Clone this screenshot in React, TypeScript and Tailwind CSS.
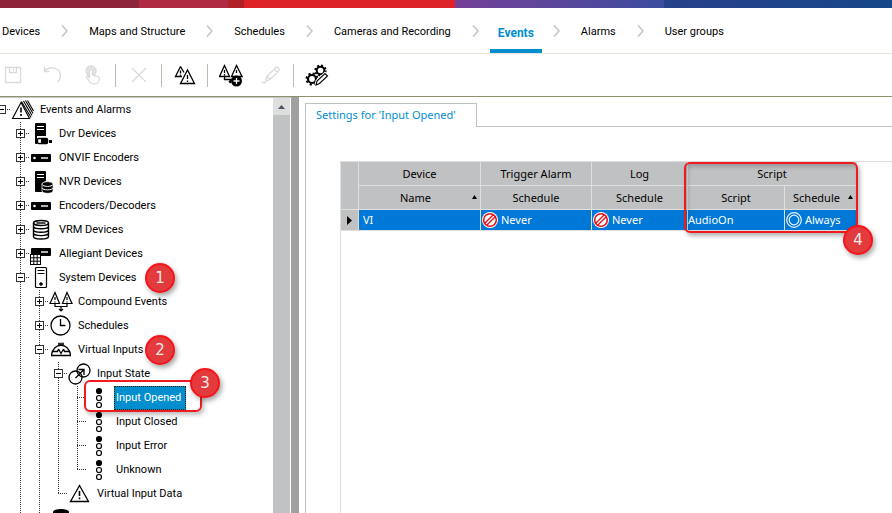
import { ReactNode } from 'react';
import clsx from 'clsx';

type IconName =
    | 'alarms'
    | 'dvr'
    | 'encoder'
    | 'nvr'
    | 'vrm'
    | 'allegiant'
    | 'system'
    | 'compound'
    | 'clock'
    | 'virtual'
    | 'state'
    | 'dots'
    | 'warning'
    | 'database';

type TreeNode = {
    id: string;
    label?: string;
    icon: IconName;
    state?: 'open' | 'closed';
    selected?: boolean;
    children?: TreeNode[];
};

const tree: TreeNode = {
    id: 'root',
    label: 'Events and Alarms',
    icon: 'alarms',
    state: 'open',
    children: [
        { id: 'dvr', label: 'Dvr Devices', icon: 'dvr', state: 'closed' },
        { id: 'onvif', label: 'ONVIF Encoders', icon: 'encoder', state: 'closed' },
        { id: 'nvr', label: 'NVR Devices', icon: 'nvr', state: 'closed' },
        { id: 'encoders', label: 'Encoders/Decoders', icon: 'encoder', state: 'closed' },
        { id: 'vrm', label: 'VRM Devices', icon: 'vrm', state: 'closed' },
        { id: 'allegiant', label: 'Allegiant Devices', icon: 'allegiant', state: 'closed' },
        {
            id: 'system',
            label: 'System Devices',
            icon: 'system',
            state: 'open',
            children: [
                { id: 'compound', label: 'Compound Events', icon: 'compound', state: 'closed' },
                { id: 'schedules', label: 'Schedules', icon: 'clock', state: 'closed' },
                {
                    id: 'virtual',
                    label: 'Virtual Inputs',
                    icon: 'virtual',
                    state: 'open',
                    children: [
                        {
                            id: 'state',
                            label: 'Input State',
                            icon: 'state',
                            state: 'open',
                            children: [
                                { id: 'opened', label: 'Input Opened', icon: 'dots', selected: true },
                                { id: 'closed', label: 'Input Closed', icon: 'dots' },
                                { id: 'error', label: 'Input Error', icon: 'dots' },
                                { id: 'unknown', label: 'Unknown', icon: 'dots' },
                            ],
                        },
                        { id: 'data', label: 'Virtual Input Data', icon: 'warning' },
                    ],
                },
                { id: 'storage', icon: 'database', state: 'closed' },
            ],
        },
        { id: 'more', icon: 'encoder', state: 'closed' },
    ],
};

const steps = ['Devices', 'Maps and Structure', 'Schedules', 'Cameras and Recording', 'Events', 'Alarms', 'User groups'];

const treeIcons: Record<IconName, ReactNode> = {
    alarms: (
        <g fill="none" stroke="#000" strokeWidth="1.1">
            <path d="M10 4.500 1.500 20.500H18.500Z" />
            <path d="M10.500 3.500 20 19.500M12.500 3 21 17.500M14.500 2.500 22 15.500M16.500 2.500 22.500 13" />
            <path d="M10 9.500V14.500M10 16V18" strokeWidth="1.600" />
        </g>
    ),
    dvr: (
        <g>
            <path d="M6 1h9a1 1 0 0 1 1 1v12H7v8H6a1 1 0 0 1-1-1V2a1 1 0 0 1 1-1Z" />
            <path d="M7 4.500h7M7 7.500h7" stroke="#fff" />
            <rect x="7.500" y="16.500" width="10" height="5" rx="1" fill="#fff" stroke="#000" strokeWidth="1.400" />
            <path d="M11 17h6v4h-6zM19 18h3v3h-3z" />
        </g>
    ),
    encoder: (
        <g>
            <rect x="1" y="8" width="20" height="8" rx="1" />
            <circle cx="4.500" cy="12" r="1.300" fill="#fff" />
            <path d="M11 12h7" stroke="#fff" strokeWidth="1.400" />
        </g>
    ),
    nvr: (
        <g>
            <path d="M6 1h9a1 1 0 0 1 1 1v9l-4 2v9H6a1 1 0 0 1-1-1V2a1 1 0 0 1 1-1Z" />
            <path d="M7 4.500h7M7 7.500h7" stroke="#fff" />
            <path d="M12 14c0-3 11-3 11 0v7c0 3-11 3-11 0Z" stroke="#fff" strokeWidth=".7" />
            <path d="M12 14.500c1 2.500 10 2.500 11 0M12 18c1 2.500 10 2.500 11 0" fill="none" stroke="#fff" />
        </g>
    ),
    vrm: (
        <g fill="none" stroke="#000" strokeWidth="1.400">
            <ellipse cx="11" cy="5" rx="7.500" ry="2.500" />
            <path d="M3.500 5V18.500c0 3.300 15 3.300 15 0V5M3.500 8.300c0 3.300 15 3.300 15 0M3.500 11.700c0 3.300 15 3.300 15 0M3.500 15.100c0 3.300 15 3.300 15 0" />
            <path d="M6.500 5h9" />
        </g>
    ),
    allegiant: (
        <g>
            <rect x="1" y="6" width="20" height="8" rx="1" />
            <path d="M11 10h7" stroke="#fff" strokeWidth="1.400" />
            <rect x=".5" y="12.500" width="10" height="10" fill="#fff" stroke="#000" />
            <path d="M3.800 12.500v10M7.200 12.500v10M.5 15.800h10M.5 19.200h10" stroke="#000" />
        </g>
    ),
    system: (
        <g fill="none" stroke="#000">
            <rect x="5.500" y="1.500" width="11" height="20" rx="1" strokeWidth="1.200" />
            <path d="M7.500 4.500h7M7.500 7.500h7" />
            <circle cx="11" cy="18" r="1.300" fill="#000" />
        </g>
    ),
    compound: (
        <g fill="none" stroke="#000" strokeWidth="1.200">
            <path d="M6 2.500 1 13.500h9.500ZM18 2.500l-4.500 11H23Z" />
            <path d="M6 7v3M6 11.500v1M18 7v3M18 11.500v1" />
            <path d="M6 14v2.500h12V14M12 16.500V21M10 19l2 2 2-2" />
        </g>
    ),
    clock: (
        <g fill="none" stroke="#000" strokeWidth="1.300">
            <circle cx="11.500" cy="11.500" r="9.500" />
            <path d="M11.500 5v6.500h5" />
        </g>
    ),
    virtual: (
        <g fill="none" stroke="#000" strokeWidth="1.300">
            <path d="M9 6h6" strokeWidth="2.500" stroke="#333" />
            <path d="M2.500 17C4 4 20 4 21.500 17M2 17.500h20M3.500 13.500h5l1-2.500M20.500 13.500h-5l-1-2.500M9.500 11l2.500 4.500 2.500-4.500" />
        </g>
    ),
    state: (
        <g fill="none" stroke="#000" strokeWidth="1.300">
            <circle cx="7.500" cy="15.500" r="6.500" />
            <circle cx="15.500" cy="8.500" r="6.500" />
            <path d="M7.500 16 15.500 8M10.500 7.500H16V13" />
        </g>
    ),
    dots: (
        <g fill="none" stroke="#000" strokeWidth="1.200">
            <circle cx="12" cy="5" r="2.500" fill="#000" />
            <circle cx="12" cy="12" r="2.500" />
            <circle cx="12" cy="19" r="2.500" />
        </g>
    ),
    warning: (
        <g fill="none" stroke="#000" strokeWidth="1.300">
            <path d="M11.500 3.500 2.500 19.500h18Z" />
            <path d="M11.500 9v5M11.500 15.500v1.800" strokeWidth="1.600" />
        </g>
    ),
    database: <path d="M4 6c0-4 16-4 16 0v13c0 4-16 4-16 0Z" />,
};

/* One 19px column of the tree's dotted guide lines */
const Guide = ({ up, down, branch, state }: { up?: boolean; down?: boolean; branch?: boolean; state?: 'open' | 'closed' }) => (
    <svg width="19" height="24" className="shrink-0" shapeRendering="crispEdges" fill="none" stroke="#333">
        {up && <path d="M9.500 0V12" strokeDasharray="1 1" />}
        {down && <path d="M9.500 12V24" strokeDasharray="1 1" />}
        {branch && <path d="M9 11.500H19" strokeDasharray="1 1" />}
        {state && (
            <>
                <rect x="5.500" y="7.500" width="8" height="8" fill="#fff" />
                <path d="M7 11.500H12" stroke="#000" />
                {state === 'closed' && <path d="M9.500 9V14" stroke="#000" />}
            </>
        )}
    </svg>
);

const TreeItem = ({ node, lines, last }: { node: TreeNode; lines: boolean[]; last: boolean }) => {
    const isRoot = node.id === 'root';

    return (
        <li>
            <div className="flex h-6 items-center">
                {lines.map((line, i) => (
                    <Guide key={i} up={line} down={line} />
                ))}
                <Guide up={!isRoot} down={!last} branch state={node.state} />
                <svg width="24" height="24" viewBox="0 0 24 24" className="shrink-0">
                    {treeIcons[node.icon]}
                </svg>
                <span
                    className={clsx(
                        'ml-[3px] pl-[2px] leading-6 whitespace-nowrap',
                        node.selected && 'bg-[#008ecf] pr-[5px] text-white outline-1 -outline-offset-1 outline-dotted outline-[#3a1c00]'
                    )}
                >
                    {node.label}
                </span>
            </div>
            {node.children && (
                <ul>
                    {node.children.map((child, i) => (
                        <TreeItem
                            key={child.id}
                            node={child}
                            lines={[...lines, !last]}
                            last={i === node.children!.length - 1}
                        />
                    ))}
                </ul>
            )}
        </li>
    );
};

const ToolButton = ({ label, disabled, children }: { label: string; disabled?: boolean; children: ReactNode }) => (
    <button type="button" aria-label={label} disabled={disabled} className="size-6 shrink-0">
        <svg width="24" height="24" viewBox="0 0 24 24" fill="none" stroke={disabled ? '#dadada' : '#000'} strokeWidth="1.300">
            {children}
        </svg>
    </button>
);

const Separator = () => <div className="mr-[11px] ml-[10px] h-[23px] w-px bg-[#bdbdae]" />;

const Marker = ({ value, className }: { value: number; className: string }) => (
    <span
        className={clsx(
            "absolute flex size-[30px] items-center justify-center rounded-full border-2 border-[#f81418] bg-[#e23a3d] font-['DejaVu_Sans'] text-[15px] text-[#f0eaea] shadow-[2px_3px_5px_rgba(0,0,0,0.35)]",
            className
        )}
    >
        {value}
    </span>
);

const Never = () => (
    <span className="flex items-center gap-[3px]">
        <svg width="16" height="16" viewBox="0 0 16 16" fill="none">
            <circle cx="8" cy="8" r="8" fill="#fff" />
            <path d="M3.500 12.500 12.500 3.500" stroke="#e3131b" strokeWidth="4" />
            <path d="M3.500 12.500 12.500 3.500" stroke="#fff" strokeWidth="1.400" />
            <circle cx="8" cy="8" r="6.300" stroke="#e3131b" strokeWidth="1.600" />
        </svg>
        Never
    </span>
);

const SortArrow = () => (
    <svg width="5" height="4" className="absolute top-[9px] right-[3px]">
        <path d="M2.500 0 5 4H0Z" />
    </svg>
);

const EventsTable = () => {
    const head = 'relative h-6 border-r border-b border-[#dfdfdf] p-0 text-center font-normal';
    const cell = 'h-[21px] border-r border-b border-[#dfdfdf] p-0';

    return (
        <table className="w-[516px] table-fixed border-separate border-spacing-0 leading-4">
            <colgroup>
                <col className="w-[18px]" />
                <col className="w-[122px]" />
                <col className="w-[111px]" />
                <col className="w-[96px]" />
                <col className="w-[97px]" />
                <col className="w-[72px]" />
            </colgroup>
            <thead className="bg-[#c0c1c2]">
                <tr>
                    <th rowSpan={2} className={head} />
                    <th className={head}>Device</th>
                    <th className={head}>Trigger Alarm</th>
                    <th className={head}>Log</th>
                    <th colSpan={2} className={head}>
                        Script
                    </th>
                </tr>
                <tr>
                    <th className={clsx(head, 'pr-2')}>
                        Name
                        <SortArrow />
                    </th>
                    <th className={head}>Schedule</th>
                    <th className={head}>Schedule</th>
                    <th className={head}>Script</th>
                    <th className={clsx(head, 'pr-2')}>
                        Schedule
                        <SortArrow />
                    </th>
                </tr>
            </thead>
            <tbody>
                <tr className="bg-[#0078d7] text-white">
                    <td className={clsx(cell, 'bg-[#c0c1c2]')}>
                        <svg width="5" height="9" className="ml-[6px]">
                            <path d="M0 0 5 4.500 0 9Z" />
                        </svg>
                    </td>
                    <td className={clsx(cell, 'pl-1')}>VI</td>
                    <td className={clsx(cell, 'pl-px')}>
                        <Never />
                    </td>
                    <td className={clsx(cell, 'pl-px')}>
                        <Never />
                    </td>
                    <td className={cell}>AudioOn</td>
                    <td className={clsx(cell, 'pl-px')}>
                        <span className="flex items-center gap-[3px]">
                            <svg width="16" height="16" viewBox="0 0 16 16" fill="none" stroke="#e8f2fb" strokeWidth="1.200">
                                <circle cx="8" cy="8" r="7.300" />
                                <circle cx="8" cy="8" r="4.800" />
                            </svg>
                            Always
                        </span>
                    </td>
                </tr>
            </tbody>
        </table>
    );
};

export default function App() {
    return (
        <div className="flex h-screen flex-col overflow-hidden bg-white font-['Roboto',sans-serif] text-[11px] text-black">
            <div className="flex h-2 shrink-0">
                <div className="w-[139px] bg-[#8e2439]" />
                <div className="w-[89px] bg-[#b12a43]" />
                <div className="w-4 bg-[#af2027]" />
                <div className="w-[211px] bg-[#dd2228]" />
                <div className="w-[209px] bg-linear-to-r from-[#733f97] to-[#3a4c9f]" />
                <div className="flex-1 bg-linear-to-r from-[#27418a] to-[#164789]" />
            </div>

            <nav className="flex h-[46px] shrink-0 items-stretch border-b border-[#e6e6da] pl-[2px] whitespace-nowrap">
                {steps.map((step, i) => (
                    <div key={step} className="flex items-center">
                        {i > 0 && (
                            <svg width="7" height="12" className="mx-[21px]" fill="none" stroke="#c3c6c9" strokeWidth="1.600">
                                <path d="M1 .5 6 6 1 11.500" />
                            </svg>
                        )}
                        <a
                            href="#"
                            className={clsx(
                                'flex h-full items-center border-b-4 pt-2',
                                step === 'Events'
                                    ? '-mx-[10px] border-[#008ecf] px-2 text-[12px] font-bold text-[#008ecf]'
                                    : 'border-transparent'
                            )}
                        >
                            {step}
                        </a>
                    </div>
                ))}
            </nav>

            <div className="flex h-[43px] shrink-0 items-center border-b border-[#8f8f6f] pl-px">
                <div className="flex gap-4">
                    <ToolButton label="Save" disabled>
                        <path d="M4.500 4.500h15v15h-15zM8.500 4.500v5h7v-5M12.500 6v2" />
                    </ToolButton>
                    <ToolButton label="Undo" disabled>
                        <path d="M3.500 3.500v5h5M3.500 8C8 3 19.500 4 19.500 12.500c0 3-1 5-3 6.500" />
                    </ToolButton>
                    <ToolButton label="Activate" disabled>
                        <circle cx="10" cy="8" r="5" fill="#e4e4e4" />
                        <path
                            d="M8.500 15V8c0-2 3-2 3 0v4l5.500 1.500c1 .5 1.500 1 1.500 2.500-.5 4-2 5-5.500 5-3 0-4-1.500-5-3l-2.500-4c0-1.500 2-1.500 3 1Z"
                            fill="#fff"
                        />
                    </ToolButton>
                </div>
                <Separator />
                <ToolButton label="Delete" disabled>
                    <path d="m5 5 14 14M19 5 5 19" />
                </ToolButton>
                <Separator />
                <ToolButton label="Alarm options">
                    <path d="M7.500 3.500 2.500 13.500h6.500M7.500 3.500 11 9.500M14.500 7l-7 13.500h14Z" />
                    <path d="M7.500 7.500v3M7.500 11.500v1.200M14.500 12v4M14.500 17.500v1.500" />
                </ToolButton>
                <Separator />
                <div className="flex gap-4">
                    <ToolButton label="Add compound event">
                        <path d="M5.500 2.500 .5 13.500h10ZM17.500 2.500l-5 11h10.500Z" />
                        <path d="M5.500 7v3M5.500 11v1.500M17.500 7v3M5.500 14v2.500h8M11.500 17v3M10 18l1.500 2" />
                        <circle cx="17.500" cy="18" r="5.500" fill="#000" stroke="none" />
                        <path d="M14.500 18h6M17.500 15v6" stroke="#fff" />
                    </ToolButton>
                    <ToolButton label="Edit" disabled>
                        <path d="m7 18 1-5 9-8.500c1.500-1 4 1.500 3 3L11 16.500Zm1-5 3 3.500M15 6l3.500 3.500M2.500 19.500H7" />
                    </ToolButton>
                </div>
                <Separator />
                <ToolButton label="Settings">
                    <circle cx="15.500" cy="7.500" r="3.800" strokeWidth="2" />
                    <circle cx="15.500" cy="7.500" r="5.200" strokeWidth="1.800" strokeDasharray="2 2.080" />
                    <circle cx="7" cy="16" r="4" strokeWidth="2.200" />
                    <circle cx="7" cy="16" r="5.600" strokeWidth="1.800" strokeDasharray="2.200 2.200" />
                    <path d="m11 22 1-4 8-7.500 2.500 2.500-8 7.500Z" fill="#fff" stroke="#fff" strokeWidth="3" />
                    <path d="m11 22 1-4 8-7.500 2.500 2.500-8 7.500Z" fill="#fff" strokeWidth="1.100" />
                </ToolButton>
            </div>

            <div className="flex min-h-0 flex-1">
                <aside className="flex w-[291px] shrink-0 border-t border-[#c8c8c8]">
                    <div className="relative min-w-0 flex-1 overflow-hidden">
                        <ul className="-ml-2">
                            <TreeItem node={tree} lines={[]} last />
                        </ul>
                        <div className="absolute top-[282px] left-[84px] h-[32px] w-[118px] rounded-md border-2 border-[#ee1c20] shadow-[2px_3px_4px_rgba(0,0,0,0.25)]" />
                        <Marker value={1} className="top-[165px] left-[145px]" />
                        <Marker value={2} className="top-[237px] left-[145px]" />
                        <Marker value={3} className="top-[270px] left-[190px]" />
                    </div>
                    <div className="mr-px w-[17px] bg-[#c0c2c4]">
                        <button type="button" aria-label="Scroll up" className="flex h-[17px] w-full items-center justify-center bg-[#dedede]">
                            <svg width="7" height="4" fill="#4a5560">
                                <path d="M3.500 0 7 4H0Z" />
                            </svg>
                        </button>
                    </div>
                </aside>
                <div className="w-2 shrink-0 bg-[#a0a0a0]" />

                <main className="flex min-w-0 flex-1 flex-col pt-[6px] pl-[6px] font-['Noto_Sans',sans-serif]">
                    <div className="flex">
                        <button type="button" className="h-6 w-[172px] border-t border-r border-l border-[#c0c1c2] pl-[10px] text-left text-[#008ecf]">
                            Settings for 'Input Opened'
                        </button>
                        <div className="flex-1 border-b border-[#c0c1c2]" />
                    </div>
                    <div className="flex flex-1 flex-col border-l border-[#c0c1c2] pt-[34px] pl-[34px]">
                        <div className="relative flex-1 border-t border-l border-[#dfdfdf]">
                            <EventsTable />
                            <div className="absolute top-0 left-[343px] h-[71px] w-[174px] rounded-md border-2 border-[#ee1c20] shadow-[2px_3px_4px_rgba(0,0,0,0.3),inset_2px_3px_4px_rgba(0,0,0,0.2)]" />
                            <Marker value={4} className="top-[63px] left-[502px]" />
                        </div>
                    </div>
                </main>
            </div>
        </div>
    );
}
